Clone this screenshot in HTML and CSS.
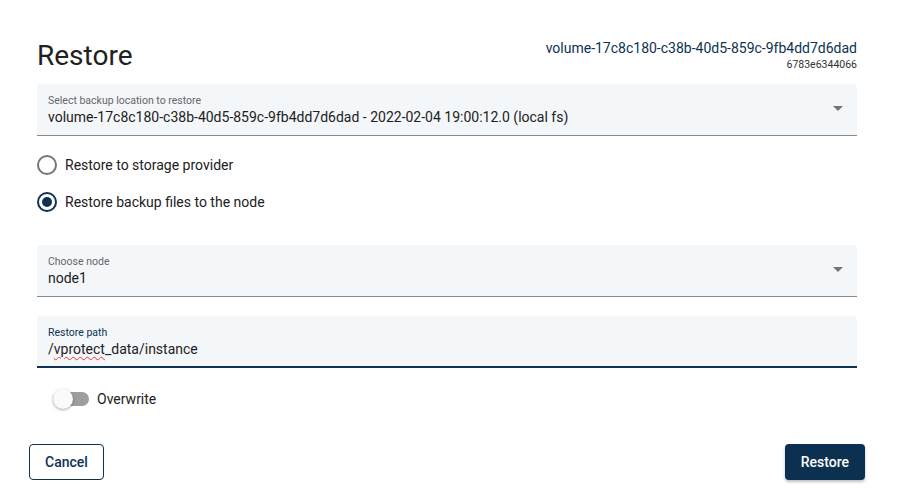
FILE: index.html
```html
<!DOCTYPE html>
<html lang="en">
<head>
  <meta charset="UTF-8" />
  <title>Restore</title>
  <link rel="stylesheet" href="styles.css">
</head>
<body>

  <div class="dialog">
    <div class="dialog-content">
      <div class="dialog-header">
        <h1>Restore</h1>
        <div class="volume-info">
          <div class="volume-name">volume-17c8c180-c38b-40d5-859c-9fb4dd7d6dad</div>
          <div class="volume-id">6783e6344066</div>
        </div>
      </div>

      <div class="field select-field">
        <label>Select backup location to restore</label>
        <div class="value">volume-17c8c180-c38b-40d5-859c-9fb4dd7d6dad - 2022-02-04 19:00:12.0 (local fs)</div>
        <span class="arrow"></span>
      </div>

      <div class="radio-group">
        <div class="radio">
          <span class="radio-circle"></span>
          <span>Restore to storage provider</span>
        </div>
        <div class="radio checked">
          <span class="radio-circle"></span>
          <span>Restore backup files to the node</span>
        </div>
      </div>

      <div class="field select-field node-field">
        <label>Choose node</label>
        <div class="value">node1</div>
        <span class="arrow"></span>
      </div>

      <div class="field focused">
        <label>Restore path</label>
        <div class="value">/<span class="misspelled">vprotect</span>_data/instance</div>
      </div>

      <div class="toggle-row">
        <span class="toggle"><span class="knob"></span></span>
        <span>Overwrite</span>
      </div>
    </div>

    <div class="dialog-actions">
      <button class="btn btn-outline">Cancel</button>
      <button class="btn btn-primary">Restore</button>
    </div>
  </div>

</body>
</html>
```

FILE: styles.css
```css
* {
  margin: 0;
  padding: 0;
  box-sizing: border-box;
}
body {
  font-family: Roboto, 'Liberation Sans', sans-serif;
  background: #fff;
  color: #212121;
  width: 897px;
  height: 504px;
  overflow: hidden;
}
.dialog {
  padding-top: 38px;
}
.dialog-content {
  padding: 0 40px 0 37px;
}
.dialog-header {
  display: flex;
  justify-content: space-between;
  align-items: flex-start;
  margin-bottom: 10px;
}
.dialog-header h1 {
  font-size: 28px;
  font-weight: 400;
  line-height: 36px;
  color: #212121;
}
.volume-info {
  text-align: right;
}
.volume-name {
  font-size: 14px;
  line-height: 20px;
  color: #0d3252;
}
.volume-id {
  font-size: 10.5px;
  line-height: 14px;
  color: #333;
}
.field {
  position: relative;
  background: #f4f7fa;
  border-radius: 4px 4px 0 0;
  border-bottom: 1px solid #8a8a8a;
  height: 52px;
  padding: 10px 11px 0 11px;
}
.field label {
  display: block;
  font-size: 10.5px;
  line-height: 13px;
  color: #666;
}
.field .value {
  font-size: 14px;
  line-height: 20px;
  color: #212121;
}
.arrow {
  position: absolute;
  right: 14px;
  top: 22px;
  width: 0;
  height: 0;
  border-left: 5px solid transparent;
  border-right: 5px solid transparent;
  border-top: 5px solid #757575;
}
.radio-group {
  display: flex;
  flex-direction: column;
  gap: 17px;
  padding-top: 19px;
  margin-bottom: 33px;
}
.radio {
  display: flex;
  align-items: center;
  gap: 8px;
  font-size: 14px;
  line-height: 20px;
  color: #212121;
}
.radio-circle {
  width: 20px;
  height: 20px;
  border: 2px solid #757575;
  border-radius: 50%;
  position: relative;
}
.radio.checked .radio-circle {
  border-color: #0d3252;
}
.radio.checked .radio-circle::after {
  content: '';
  position: absolute;
  left: 3px;
  top: 3px;
  width: 10px;
  height: 10px;
  border-radius: 50%;
  background: #0d3252;
}
.node-field {
  margin-bottom: 19px;
}
.focused {
  border-bottom: 2px solid #0d3252;
}
.focused label {
  color: #0d3252;
}
.misspelled {
  text-decoration: underline wavy #e53935;
  text-decoration-thickness: 1px;
  text-underline-offset: 2px;
}
.toggle-row {
  display: flex;
  align-items: center;
  gap: 8px;
  margin: 21px 0 0 16px;
  font-size: 14px;
  line-height: 20px;
  color: #212121;
}
.toggle {
  position: relative;
  width: 36px;
  height: 14px;
  border-radius: 7px;
  background: #9e9e9e;
}
.knob {
  position: absolute;
  left: 0;
  top: -3px;
  width: 20px;
  height: 20px;
  border-radius: 50%;
  background: #fafafa;
  box-shadow: 0 1px 3px rgba(0, 0, 0, 0.35);
}
.dialog-actions {
  display: flex;
  justify-content: space-between;
  padding: 0 32px 0 29px;
  margin-top: 35px;
}
.btn {
  font-family: Roboto, 'Liberation Sans', sans-serif;
  font-size: 14px;
  font-weight: 500;
  height: 36px;
  padding: 0 15px;
  border-radius: 4px;
  cursor: pointer;
}
.btn-outline {
  background: #fff;
  color: #0d3252;
  border: 1px solid #0d3252;
}
.btn-primary {
  background: #0b3050;
  color: #fff;
  border: none;
  padding: 0 16px;
  box-shadow: 0 2px 3px rgba(0, 0, 0, 0.25);
}
```
